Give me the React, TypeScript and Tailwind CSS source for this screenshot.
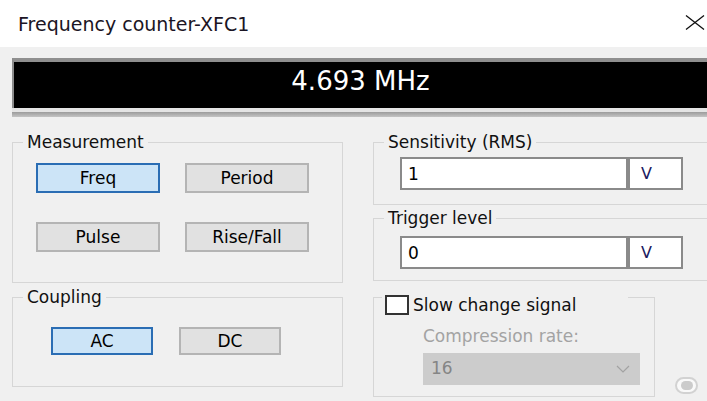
import type { ReactElement, ReactNode } from 'react';

type BtnProps = { label: string; active?: boolean; className?: string };

function ToggleButton({ label, active, className }: BtnProps): ReactElement {
  return (
    <button
      type="button"
      className={
        'flex items-center justify-center border-2 text-[17px] leading-5 text-black ' +
        (active ? 'border-[#2a6db4] bg-[#cce4f7] ' : 'border-[#b4b4b4] bg-[#e1e1e1] ') +
        (className ?? '')
      }
    >
      {label}
    </button>
  );
}

// fieldset padding would also push the legend, so the inset goes on the inner div
function Group({ title, className, inner, children }: { title: string; className: string; inner: string; children: ReactNode }) {
  return (
    <fieldset className={'border border-[#d6d6d6] ' + className}>
      <legend className="ml-[10px] px-[4px] text-[17px] leading-5 text-[#111]">{title}</legend>
      <div className={inner}>{children}</div>
    </fieldset>
  );
}

function ValueField({ value }: { value: string }) {
  return (
    <div className="flex h-[33px]">
      <input
        readOnly
        value={value}
        className="h-full w-[228px] border-2 border-[#8a8a8a] bg-white pl-[6px] text-[17px] text-black outline-none"
      />
      <div className="flex h-full w-[55px] items-center border-2 border-[#8a8a8a] bg-white pl-[11px] text-[16px] text-[#1a1a60]">
        V
      </div>
    </div>
  );
}

export default function App(): ReactElement {
  return (
    <div className="h-[401px] w-[707px] overflow-hidden bg-[#f0f0f0] font-['DejaVu_Sans',sans-serif]">
      {/* title bar */}
      <div className="flex h-[47px] items-start justify-between bg-white">
        <span className="ml-[18px] mt-[12px] text-[19px] leading-6 text-[#1b1524]">Frequency counter-XFC1</span>
        <svg className="mr-[2px] mt-[15px]" width="20" height="15" viewBox="0 0 20 15" preserveAspectRatio="none">
          <path d="M1 0.5 L19 14.5 M19 0.5 L1 14.5" stroke="#111" strokeWidth="1.3" fill="none" />
        </svg>
      </div>

      {/* readout */}
      <div className="pl-[12px] pt-[11px]">
        <div className="h-[50px] border-l-2 border-t-4 border-l-[#8c8c8c] border-t-[#8f8f8f] bg-black pt-[6px] text-center text-[26px] leading-[26px] text-white">
          4.693 MHz
        </div>
        <div className="h-[4px] bg-[#e4e4e4]" />
        <div className="h-[5px] bg-gradient-to-b from-[#9c9c9c] to-[#c4c4c4]" />
      </div>

      <div className="flex gap-[30px] pl-[12px] pt-[15px]">
        {/* left column */}
        <div className="flex w-[331px] shrink-0 flex-col gap-[4px]">
          <Group title="Measurement" className="h-[151px]" inner="pl-[23px] pt-[11px]">
            <div className="grid grid-cols-[124px_124px] gap-x-[25px] gap-y-[29px]">
              <ToggleButton label="Freq" active className="h-[30px]" />
              <ToggleButton label="Period" className="h-[30px]" />
              <ToggleButton label="Pulse" className="h-[30px]" />
              <ToggleButton label="Rise/Fall" className="h-[30px]" />
            </div>
          </Group>
          <Group title="Coupling" className="h-[100px]" inner="flex gap-[26px] pl-[38px] pt-[20px]">
            <ToggleButton label="AC" active className="h-[28px] w-[102px]" />
            <ToggleButton label="DC" className="h-[28px] w-[102px]" />
          </Group>
        </div>

        {/* right column */}
        <div className="flex shrink-0 flex-col">
          <Group title="Sensitivity (RMS)" className="h-[73px] w-[345px]" inner="pl-[26px] pt-[5px]">
            <ValueField value="1" />
          </Group>
          <Group title="Trigger level" className="mt-[3px] h-[73px] w-[345px]" inner="pl-[26px] pt-[8px]">
            <ValueField value="0" />
          </Group>

          <div className="mt-[6px] flex items-end">
            <fieldset className="h-[110px] w-[282px] border border-[#d6d6d6]">
              <legend className="relative top-[8px] ml-[8px] flex h-5 w-[246px] items-center gap-[4px] pl-[3px]">
                <span className="h-[20px] w-[24px] border-2 border-[#333] bg-white" />
                <span className="text-[17px] leading-5 text-[#111]">Slow change signal</span>
              </legend>
              <div className="pl-[49px]">
                <div className="mt-[19px] text-[17px] leading-5 text-[#a3a3a3]">Compression rate:</div>
                <div className="mt-[7px] flex h-[32px] w-[217px] items-center justify-between bg-[#cccccc] pl-[8px] pr-[10px] text-[17px] text-[#858585]">
                  <span>16</span>
                  <svg width="14" height="8" viewBox="0 0 14 8">
                    <path d="M1 1 L7 7 L13 1" stroke="#a2a2a2" strokeWidth="1.2" fill="none" />
                  </svg>
                </div>
              </div>
            </fieldset>
            <div className="mb-[3px] ml-[20px] flex h-[17px] w-[23px] items-center justify-center rounded-full border-2 border-[#d2d2d2] bg-[#f9f9f9]">
              <div className="h-[9px] w-[12px] rounded-full bg-[#cbcbcb]" />
            </div>
          </div>
        </div>
      </div>
    </div>
  );
}
